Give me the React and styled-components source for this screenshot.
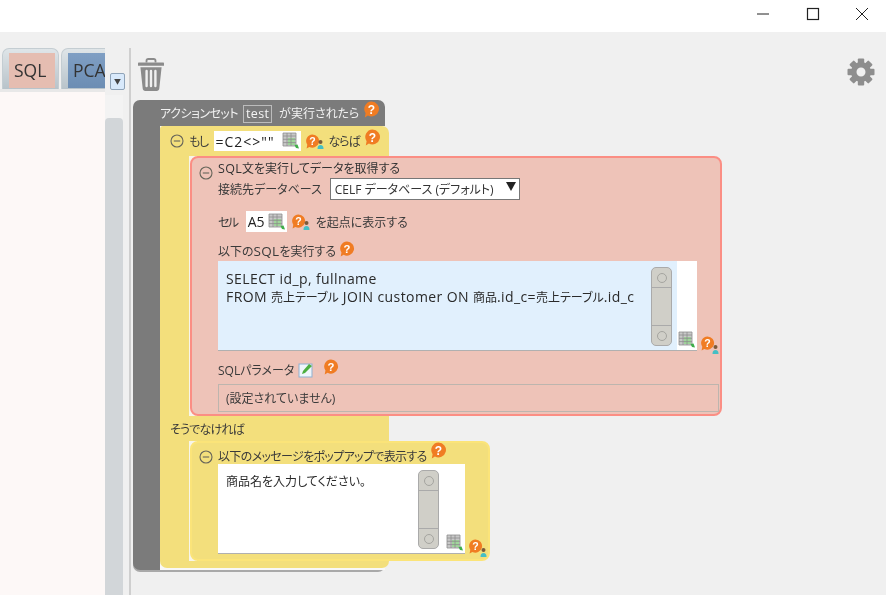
import React from "react";
import styled, { createGlobalStyle } from "styled-components";

const Global = createGlobalStyle`
  html, body { margin: 0; padding: 0; background: #f0f0f0; }
  body { font-family: "Open Sans", "Noto Sans CJK JP", sans-serif; font-size: 12px; color: #333; font-feature-settings: "palt"; }
`;

const Page = styled.div`
  width: 886px; height: 595px; overflow: hidden; background: #f0f0f0;
  display: flex; flex-direction: column; filter: blur(0.3px);
`;
const TitleBar = styled.div`
  height: 32px; background: #fff; display: flex; justify-content: flex-end; flex: none;
`;
const WinButton = styled.div`
  width: 50px; height: 27px; display: flex; align-items: center; justify-content: center; flex: none;
  &:last-child { width: 48px; }
`;
const Main = styled.div`display: flex; flex: 1; min-height: 0;`;
const LeftPane = styled.div`
  width: 105px; flex: none; display: flex; flex-direction: column; overflow: hidden;
`;
const Tabs = styled.div`
  height: 60px; padding-top: 16px; box-sizing: border-box; display: flex; gap: 2px; margin-left: -5px; flex: none;
  border-bottom: 3px solid #e8e8e8;
`;
const TabStub = styled.div`
  flex: none; width: 5px; box-sizing: border-box;
  background: linear-gradient(#dfe5e8, #b8c3ca); border: 1px solid #c4cdd2; border-bottom: 0;
  border-radius: 0 7px 0 0;
`;
const Tab = styled.div`
  flex: none; width: ${p => p.$w}px; box-sizing: border-box; padding: 4px 3px 0 6px;
  background: linear-gradient(#dfe5e8, #b8c3ca); border: 1px solid #c4cdd2; border-bottom: 0;
  border-radius: 7px 7px 0 0;
`;
const TabInner = styled.div`
  height: 35px; background: ${p => p.$bg}; font-size: 17.5px; line-height: 35px; padding-left: 5px;
  color: #333; white-space: nowrap;
  font-family: "Open Sans", sans-serif;
`;
const PaneBody = styled.div`flex: 1; background: #fdf8f7;`;
const ScrollColumn = styled.div`
  width: 24px; flex: none; display: flex; flex-direction: column; background: #f0f0f0;
`;
const DropButton = styled.div`
  width: 15px; height: 17px; margin: 41px 0 5px 5px; box-sizing: border-box; border: 1px solid #8fa3b8; border-radius: 2px;
  background: #d8e9fb; display: flex; align-items: center; justify-content: center; flex: none;
  color: #444; font-size: 7px; line-height: 1;
`;
const ScrollTrack = styled.div`
  width: 18px; flex: 1; background: #f3f3f3; padding-top: 23px; box-sizing: border-box; display: flex;
`;
const ScrollThumb = styled.div`flex: 1; background: #d2d6d9; border-radius: 4px 4px 0 0;`;
const Divider = styled.div`
  width: 2px; flex: none; margin-top: 16px; background: #cfcfcf;
`;
const Canvas = styled.div`flex: 1; min-width: 0; display: flex; flex-direction: column; padding-left: 2px;`;
const CanvasTools = styled.div`
  height: 68px; flex: none; display: flex; justify-content: space-between; padding: 26px 11px 0 5px; box-sizing: border-box;
`;
const ActionSet = styled.div`
  width: 252px; height: 470px; box-sizing: border-box; background: #7b7b7b; border-radius: 7px;
  box-shadow: 0 2px 0 #a9a9a9; padding-left: 27px; display: flex; flex-direction: column;
`;
const ActionHeader = styled.div`
  height: 26px; flex: none; display: flex; align-items: center; color: #f2f2f2; white-space: nowrap;
`;
const NameBox = styled.span`
  border: 1px solid #bcbcbc; height: 18px; width: 29px; box-sizing: border-box; line-height: 16px; text-align: center; margin: 1px 7px 0 5px;
  color: #f4f4f4; font-size: 12.5px; letter-spacing: 0.4px;
`;
const WhiteBack = styled.div`
  flex: none; width: 225px; height: 444px; background: #f8f8f8;
`;
const IfBlock = styled.div`
  width: 229px; height: 442px; background: #f3df7c; border-radius: 3px 7px 7px 7px; display: flex; flex-direction: column;
`;
const IfHeader = styled.div`
  height: 30px; flex: none; display: flex; align-items: center; padding-left: 10px; white-space: nowrap;
`;
const Label = styled.span`
  margin-left: ${p => p.$ml || 0}px; letter-spacing: ${p => p.$ls || 0}px; white-space: nowrap; flex: none;
  color: ${p => p.$c || "#3a3a3a"};
`;
const Lat = styled.span`
  font-size: ${p => p.$s || 14}px; letter-spacing: ${p => p.$ls ?? 0.4}px;
`;
const CellInput = styled.div`
  width: ${p => p.$w}px; height: ${p => p.$h}px; flex: none; background: #fff; margin-left: ${p => p.$ml}px;
  display: flex; align-items: center; padding: 0 1px 0 2px; box-sizing: border-box; justify-content: space-between;
  color: #222; white-space: nowrap;
`;
const CommandBack = styled.div`
  margin-left: 29px; padding-left: 1px; flex: none; width: max-content;
  background: linear-gradient(90deg, #f7f5ea 8px, transparent 8px);
`;
const CommandBlock = styled.div`
  box-sizing: border-box; width: ${p => p.$w}px; height: ${p => p.$h}px;
  background: ${p => p.$bg}; border: 2px solid ${p => p.$bd}; border-radius: 8px;
  padding: 0 0 0 26px; position: relative;
`;
const Collapse = styled.span`
  position: absolute; left: ${p => p.$l}px; top: ${p => p.$t}px; display: flex;
`;
const TitleLine = styled.div`
  height: ${p => p.$h}px; box-sizing: border-box; padding-top: ${p => p.$pt || 0}px; display: flex; align-items: center; white-space: nowrap;
`;
const Select = styled.div`
  width: 190px; height: 22px; box-sizing: border-box; background: #fff; border: 1px solid #777; margin-left: 8px;
  display: flex; align-items: center; padding: 0 3px 0 4px; justify-content: space-between; color: #333; white-space: nowrap;
`;
const Arrow = styled.span`
  width: 0; height: 0; border-left: 5px solid transparent; border-right: 5px solid transparent; border-top: 9px solid #222; margin-top: -5px;
`;
const CodeArea = styled.div`
  width: ${p => p.$w}px; height: 90px; box-sizing: border-box; margin-top: ${p => p.$mt || 0}px; background: #fff; border-bottom: 1px solid #b0b0b0; position: relative; flex: none;
  display: flex;
`;
const CodeText = styled.div`
  width: ${p => p.$tw}px; flex: none; height: 100%; background: ${p => p.$bg}; box-sizing: border-box; padding: 9px 8px; line-height: 17px; color: #2a2a2a;
  white-space: pre; position: relative;
`;
const ScrollWidget = styled.div`
  position: absolute; right: ${p => p.$r}px; top: 6px; width: 21px; height: 79px; box-sizing: border-box;
  background: #d0cfc8; border: 1px solid #aaa; border-radius: 5px; display: flex; flex-direction: column; align-items: center; justify-content: space-between;
`;
const ScrollEnd = styled.span`
  height: 20px; width: 100%; display: flex; align-items: center; justify-content: center; flex: none; box-sizing: border-box;
  ${p => p.$top ? "border-bottom: 1px solid #aaa;" : "border-top: 1px solid #aaa;"}
`;
const Dot = styled.span`
  width: 8px; height: 8px; border: 1px solid #a5a5a0; border-radius: 50%;
`;
const AreaTools = styled.span`
  position: absolute; left: ${p => p.$l}px; bottom: 1px; display: flex;
`;
const OuterTools = styled.span`
  position: absolute; left: ${p => p.$l}px; top: ${p => p.$t}px; display: flex; align-items: flex-end;
`;
const ParamBox = styled.div`
  width: 501px; height: 28px; box-sizing: border-box; border: 1px solid #bdb5ae; line-height: 28px; padding-left: 7px; color: #3a3a3a;
`;
const ElseLine = styled.div`
  height: 25px; flex: none; display: flex; align-items: center; padding-left: 10px;
`;
const HelpSvg = styled.svg`
  flex: none; margin-left: ${p => p.$ml || 0}px; transform: translateY(${p => p.$up ? -p.$up : 0}px);
`;
const PersonSvg = styled.svg`
  flex: none; margin-left: -3px; transform: translateY(3px);
`;
const Spacer = styled.span`
  width: ${p => p.$w}px; flex: none;
`;

const Help = ({ s = 17, ml, up }) => (
  <HelpSvg width={s} height={s} viewBox="0 0 17 17" $ml={ml} $up={up}>
    <path d="M8.5 .5a7.5 7.5 0 1 1-3.6 14.1L1.8 16.5l.8-4.3A7.5 7.5 0 0 1 8.5 .5z" fill="#f07c23" />
    <text x="8.5" y="12.6" textAnchor="middle" fontSize="12" fontWeight="700" fontFamily="Liberation Sans" fill="#fff">?</text>
  </HelpSvg>
);
const Person = () => (
  <PersonSvg width="7" height="10" viewBox="0 0 7 10">
    <circle cx="3.5" cy="3" r="2" fill="#7a5a3a" />
    <path d="M.5 10c0-3 1-4 3-4s3 1 3 4z" fill="#45bfc4" />
  </PersonSvg>
);
const HelpPerson = () => (
  <>
    <Help s={15} />
    <Person />
  </>
);
const Grid = () => (
  <svg width="18" height="18" viewBox="0 0 18 18" style={{ flex: "none" }}>
    <rect x="1" y="1" width="13" height="13" fill="#c8c8c8" />
    <rect x="6" y="6" width="7" height="7" fill="#9fd69a" />
    <path d="M1 1h13v13H1zM1 4h13M1 7.3h13M1 10.6h13M5 1v13M9 1v13" fill="none" stroke="#8d8d8d" strokeWidth=".8" />
    <path d="M12.5 13l3-.5 1.5 4-3-.5z" fill="#3fae49" />
  </svg>
);
const Minus = () => (
  <svg width="14" height="14" viewBox="0 0 14 14">
    <circle cx="7" cy="7" r="6" fill="none" stroke="#67655a" strokeWidth="1.1" />
    <path d="M3.8 7h6.4" stroke="#67655a" strokeWidth="1.1" />
  </svg>
);
const Edit = () => (
  <svg width="16" height="16" viewBox="0 0 16 16" style={{ flex: "none" }}>
    <rect x="1" y="2" width="13" height="13" fill="#eef5fb" stroke="#8fb1d1" />
    <path d="M4 12l1-3 6-7 3 2-7 7z" fill="#4cae3f" />
  </svg>
);
const Trash = () => (
  <svg width="26" height="33" viewBox="0 0 26 33">
    <path d="M8.5 4.5V2.8C8.5 1.8 9.3 1 10.3 1h5.4c1 0 1.8.8 1.8 1.8v1.7" fill="none" stroke="#8b8b8b" strokeWidth="1.8" />
    <path d="M1 4.6h24c.6 0 1 .4 1 1v2.2H0V5.6c0-.6.4-1 1-1z" fill="#8b8b8b" />
    <path d="M2.4 9.2h21.2l-2.3 21.4c-.1 1.4-1.2 2.4-2.6 2.4H7.3c-1.4 0-2.5-1-2.6-2.4z" fill="#8b8b8b" />
    <path d="M8.6 13v15M13 13v15M17.4 13v15" stroke="#f0f0f0" strokeWidth="2.4" strokeLinecap="round" />
  </svg>
);
const Gear = () => (
  <svg width="28" height="28" viewBox="0 0 28 28">
    <g fill="#8e8e8e">
      {[0, 45, 90, 135, 180, 225, 270, 315].map(a => (
        <rect key={a} x="10.8" y="0.5" width="6.4" height="7" rx="1" transform={`rotate(${a} 14 14)`} />
      ))}
      <path fillRule="evenodd" d="M14 4a10 10 0 1 0 0 20 10 10 0 0 0 0-20zm0 5.5a4.5 4.5 0 1 1 0 9 4.5 4.5 0 0 1 0-9z" />
    </g>
  </svg>
);
const Scroll = ({ r }) => (
  <ScrollWidget $r={r}>
    <ScrollEnd $top><Dot /></ScrollEnd>
    <ScrollEnd><Dot /></ScrollEnd>
  </ScrollWidget>
);

export default function App() {
  return (
    <Page>
      <Global />
      <TitleBar>
        <WinButton>
          <svg width="14" height="14" viewBox="0 0 14 14"><path d="M1 7h12" stroke="#222" strokeWidth="1" /></svg>
        </WinButton>
        <WinButton>
          <svg width="14" height="14" viewBox="0 0 14 14"><rect x="1.5" y="1.5" width="11" height="11" fill="none" stroke="#222" strokeWidth="1.2" /></svg>
        </WinButton>
        <WinButton>
          <svg width="14" height="14" viewBox="0 0 14 14"><path d="M1 1l12 12M13 1L1 13" stroke="#222" strokeWidth="1" /></svg>
        </WinButton>
      </TitleBar>
      <Main>
        <LeftPane>
          <Tabs>
            <TabStub />
            <Tab $w={57}><TabInner $bg="#e5bdb1">SQL</TabInner></Tab>
            <Tab $w={50}><TabInner $bg="linear-gradient(#7f9fc4,#6c8db3)">PCA</TabInner></Tab>
          </Tabs>
          <PaneBody />
        </LeftPane>
        <ScrollColumn>
          <DropButton>▼</DropButton>
          <ScrollTrack><ScrollThumb /></ScrollTrack>
        </ScrollColumn>
        <Divider />
        <Canvas>
          <CanvasTools><Trash /><Gear /></CanvasTools>
          <ActionSet>
            <ActionHeader>
              <Label $c="#f2f2f2" $ls={-0.5}>アクションセット</Label>
              <NameBox>test</NameBox>
              <Label $c="#f2f2f2">が実行されたら</Label>
              <Help ml={4} up={4} />
            </ActionHeader>
            <WhiteBack>
              <IfBlock>
                <IfHeader>
                  <Minus />
                  <Label $ml={5} $ls={-1.5}>もし</Label>
                  <CellInput $w={87} $h={20} $ml={6}><Lat $ls={1}>=C2&lt;&gt;""</Lat><Grid /></CellInput>
                  <Spacer $w={4} />
                  <HelpPerson />
                  <Label $ml={5} $ls={-1}>ならば</Label>
                  <Help ml={4} up={4} />
                </IfHeader>
                <CommandBack>
                  <CommandBlock $w={532} $h={260} $bg="#eec3b8" $bd="#fb8e84">
                    <Collapse $l={7} $t={8}><Minus /></Collapse>
                    <TitleLine $h={19}><span><Lat $s={12.5} $ls={0.3}>SQL</Lat>文を実行してデータを取得する</span></TitleLine>
                    <TitleLine $h={23}>
                      <Label>接続先データベース</Label>
                      <Select>CELF データベース (デフォルト)<Arrow /></Select>
                    </TitleLine>
                    <TitleLine $h={43}>
                      <Label $ls={-1.5}>セル</Label>
                      <CellInput $w={41} $h={21} $ml={8}><Lat $ls={0}>A5</Lat><Grid /></CellInput>
                      <Spacer $w={4} />
                      <HelpPerson />
                      <Label $ml={6}>を起点に表示する</Label>
                    </TitleLine>
                    <TitleLine $h={16}>
                      <Label>以下の<Lat $s={13.5} $ls={0.3}>SQL</Lat>を実行する</Label>
                      <Help s={16} ml={3} up={2} />
                    </TitleLine>
                    <CodeArea $w={479} $mt={2}>
                      <CodeText $tw={459} $bg="#e1f0fd">
                        <Lat>SELECT id_p, fullname</Lat>{"\n"}
                        <Lat>FROM </Lat>売上テーブル<Lat> JOIN customer ON </Lat>商品<Lat>.id_c=</Lat>売上テーブル<Lat>.id_c</Lat>
                      </CodeText>
                      <Scroll r={25} />
                      <AreaTools $l={460}><Grid /></AreaTools>
                      <OuterTools $l={482} $t={75}><HelpPerson /></OuterTools>
                    </CodeArea>
                    <TitleLine $h={33} $pt={4}>
                      <Label>SQLパラメータ</Label>
                      <Spacer $w={4} />
                      <Edit />
                      <Spacer $w={9} />
                      <Help s={16} up={3} />
                    </TitleLine>
                    <ParamBox>(設定されていません)</ParamBox>
                  </CommandBlock>
                </CommandBack>
                <ElseLine><Label $ls={-0.8}>そうでなければ</Label></ElseLine>
                <CommandBack>
                  <CommandBlock $w={300} $h={120} $bg="#f3df7c" $bd="#fbe479">
                    <Collapse $l={7} $t={7}><Minus /></Collapse>
                    <TitleLine $h={21} $pt={5}>
                      <Label $ls={-0.65}>以下のメッセージをポップアップで表示する</Label>
                      <Help ml={3} up={6} />
                    </TitleLine>
                    <CodeArea $w={247}>
                      <CodeText $tw={247} $bg="#fff">商品名を入力してください。</CodeText>
                      <Scroll r={26} />
                      <AreaTools $l={228}><Grid /></AreaTools>
                      <OuterTools $l={250} $t={75}><HelpPerson /></OuterTools>
                    </CodeArea>
                  </CommandBlock>
                </CommandBack>
              </IfBlock>
            </WhiteBack>
          </ActionSet>
        </Canvas>
      </Main>
    </Page>
  );
}
